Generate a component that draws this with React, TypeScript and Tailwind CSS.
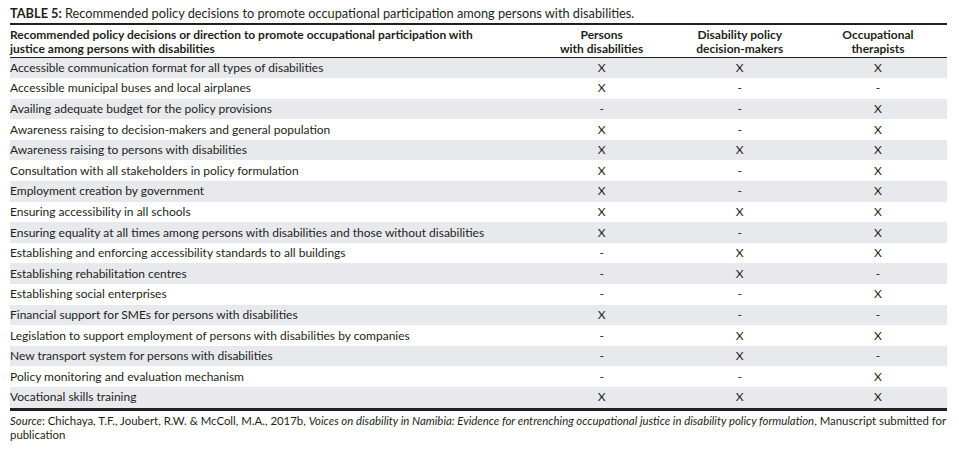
const rows: [string, string, string, string][] = [
  ['Accessible communication format for all types of disabilities', 'X', 'X', 'X'],
  ['Accessible municipal buses and local airplanes', 'X', '-', '-'],
  ['Availing adequate budget for the policy provisions', '-', '-', 'X'],
  ['Awareness raising to decision-makers and general population', 'X', '-', 'X'],
  ['Awareness raising to persons with disabilities', 'X', 'X', 'X'],
  ['Consultation with all stakeholders in policy formulation', 'X', '-', 'X'],
  ['Employment creation by government', 'X', '-', 'X'],
  ['Ensuring accessibility in all schools', 'X', 'X', 'X'],
  ['Ensuring equality at all times among persons with disabilities and those without disabilities', 'X', '-', 'X'],
  ['Establishing and enforcing accessibility standards to all buildings', '-', 'X', 'X'],
  ['Establishing rehabilitation centres', '-', 'X', '-'],
  ['Establishing social enterprises', '-', '-', 'X'],
  ['Financial support for SMEs for persons with disabilities', 'X', '-', '-'],
  ['Legislation to support employment of persons with disabilities by companies', '-', 'X', 'X'],
  ['New transport system for persons with disabilities', '-', 'X', '-'],
  ['Policy monitoring and evaluation mechanism', '-', '-', 'X'],
  ['Vocational skills training', 'X', 'X', 'X'],
]

export default function App() {
  return (
    <div className="w-[959px] h-[450px] bg-white text-[#231f20] px-[10px] pt-[4px]" style={{ fontFamily: 'Lato, "Open Sans", sans-serif' }}>
      <div className="w-[937px]">
        {/* Caption */}
        <p className="text-[12.75px] leading-[18px]">
          <span className="font-bold">TABLE 5:</span> Recommended policy decisions to promote occupational participation among persons with disabilities.
        </p>

        <table className="w-full border-collapse mt-[1px] text-[12px]">
          <thead>
            <tr className="border-t-2 border-b border-[#231f20] leading-[14px]">
              <th className="text-left align-top font-bold pt-[3px] pb-[1px] w-[522px]">
                Recommended policy decisions or direction to promote occupational participation with
                <br />
                justice among persons with disabilities
              </th>
              <th className="text-center align-top font-bold pt-[3px] w-[138px]">Persons<br />with disabilities</th>
              <th className="text-center align-top font-bold pt-[3px] w-[138px]">Disability policy<br />decision-makers</th>
              <th className="text-center align-top font-bold pt-[3px] w-[138px]">Occupational<br />therapists</th>
            </tr>
          </thead>
          <tbody>
            {rows.map((r, i) => (
              <tr key={i} className={`h-[20.6px] ${i % 2 === 0 ? 'bg-[#e8e9ed]' : 'bg-white'}`}>
                <td className="text-left leading-[14px]">{r[0]}</td>
                <td className="text-center">{r[1]}</td>
                <td className="text-center">{r[2]}</td>
                <td className="text-center">{r[3]}</td>
              </tr>
            ))}
          </tbody>
        </table>
        <div className="border-t-[3px] border-[#231f20]" />

        {/* Source note */}
        <div className="text-[11.4px] leading-[14px] mt-[3px]">
          <p className="whitespace-nowrap">
            <span className="italic">Source</span>: Chichaya, T.F., Joubert, R.W. &amp; McColl, M.A., 2017b, <span className="italic">Voices on disability in Namibia: Evidence for entrenching occupational justice in disability policy formulation</span>, Manuscript submitted for
          </p>
          <p>publication</p>
        </div>
      </div>
    </div>
  )
}
